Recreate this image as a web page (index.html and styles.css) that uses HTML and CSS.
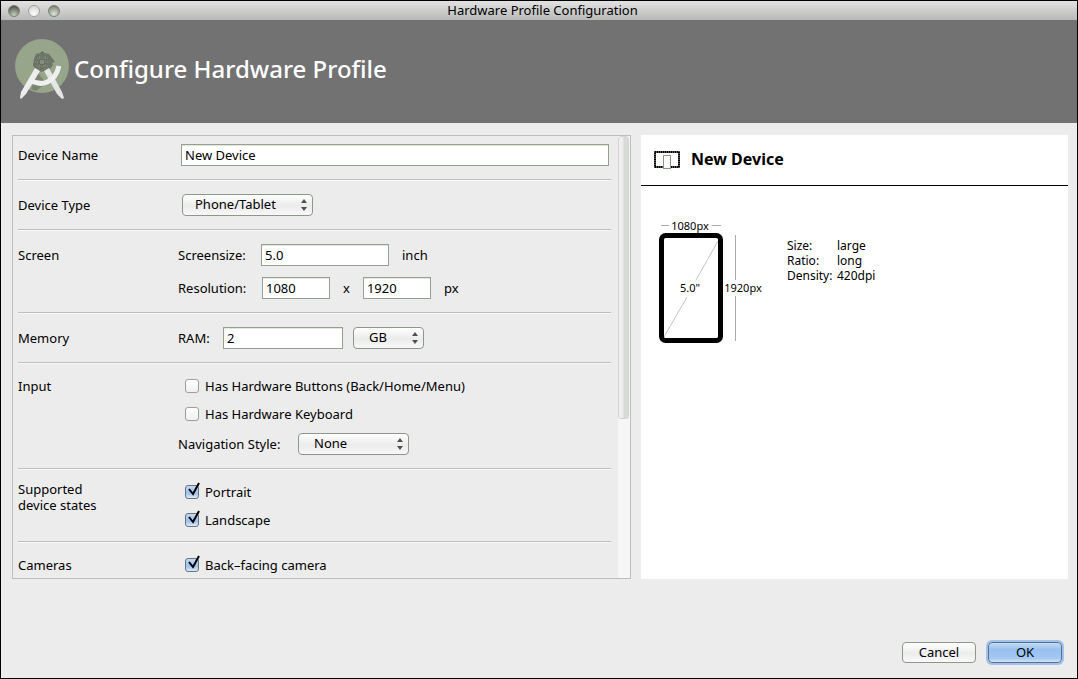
FILE: index.html
```html
<!DOCTYPE html>
<html lang="en">
<head>
<meta charset="utf-8">
<title>Hardware Profile Configuration</title>
<link rel="stylesheet" href="styles.css">
</head>
<body>
<div class="window">
  <div class="titlebar">
    <div class="lights">
      <button class="light light-dark" type="button" aria-label="Close"></button>
      <button class="light light-pale" type="button" aria-label="Minimize"></button>
      <button class="light" type="button" aria-label="Zoom"></button>
    </div>
    <div class="window-title">Hardware Profile Configuration</div>
  </div>

  <header class="banner">
    <svg class="logo" width="56" height="62" viewBox="0 0 56 62" aria-hidden="true">
      <circle cx="28" cy="27" r="27" fill="#97a58a"/>
      <path d="M24 34l-7 16 5 2 10-8z" fill="#7a8472"/>
      <path d="M20 20l2-5 4-1 2-2 3 2 4 1 6 8-3 1 1 2-5 6-11 1-4-7z" fill="#6c7468"/>
      <path d="M23 19h11M21 23h15M23 27h13M26 15l-1 15M31 15v15" stroke="#88937f" stroke-width="1" fill="none" stroke-dasharray="1 1"/>
      <circle cx="28" cy="23" r="3" fill="#858c80" stroke="#5f6a59"/>
      <path d="M21 29l5 3-14 23-5 5-1-1 1-6z" fill="#ededed"/>
      <path d="M30 32l5-3 13 24 2 6-2 1-5-5z" fill="#e5e5e5"/>
      <path d="M16 41c11 7 25 3 29-14" fill="none" stroke="#f0f0f0" stroke-width="5"/>
    </svg>
    <h1>Configure Hardware Profile</h1>
  </header>

  <main class="content">
    <form class="panel" id="profile">
      <div class="sections">
        <section class="section section-first">
          <label class="section-label" for="name">Device Name</label>
          <div class="row"><input class="text name" id="name" type="text" value="New Device"></div>
        </section>
        <section class="section">
          <label class="section-label" for="type">Device Type</label>
          <div class="row">
            <span class="select select-type"><select id="type"><option>Phone/Tablet</option></select><svg width="6" height="12" viewBox="0 0 6 12"><path d="M3 0l3 4H0zM0 8h6l-3 4z"/></svg></span>
          </div>
        </section>
        <section class="section">
          <div class="section-label">Screen</div>
          <div class="rows rows-loose">
            <div class="row">
              <label class="lead" for="size">Screensize:</label>
              <input class="text size" id="size" type="text" value="5.0">
              <span class="unit">inch</span>
            </div>
            <div class="row">
              <label class="lead lead-res" for="resx">Resolution:</label>
              <input class="text res" id="resx" type="text" value="1080">
              <label class="unit" for="resy">x</label>
              <input class="text res" id="resy" type="text" value="1920">
              <span class="unit">px</span>
            </div>
          </div>
        </section>
        <section class="section">
          <div class="section-label">Memory</div>
          <div class="row">
            <label class="lead lead-ram" for="ram">RAM:</label>
            <input class="text ram" id="ram" type="text" value="2">
            <span class="select select-unit"><select aria-label="Memory unit"><option>GB</option></select><svg width="6" height="12" viewBox="0 0 6 12"><path d="M3 0l3 4H0zM0 8h6l-3 4z"/></svg></span>
          </div>
        </section>
        <section class="section section-checks">
          <div class="section-label">Input</div>
          <div class="rows rows-input">
            <div class="rows">
              <label class="check"><input type="checkbox"><span>Has Hardware Buttons (Back/Home/Menu)</span></label>
              <label class="check"><input type="checkbox"><span>Has Hardware Keyboard</span></label>
            </div>
            <div class="row">
              <label class="lead lead-nav" for="nav">Navigation Style:</label>
              <span class="select select-nav"><select id="nav"><option>None</option></select><svg width="6" height="12" viewBox="0 0 6 12"><path d="M3 0l3 4H0zM0 8h6l-3 4z"/></svg></span>
            </div>
          </div>
        </section>
        <section class="section section-states">
          <div class="section-label label-tall">Supported<br>device states</div>
          <div class="rows">
            <label class="check"><input type="checkbox" checked><svg width="17" height="18" viewBox="0 0 17 18"><path d="M4 8l4 5 6-11"/></svg><span>Portrait</span></label>
            <label class="check"><input type="checkbox" checked><svg width="17" height="18" viewBox="0 0 17 18"><path d="M4 8l4 5 6-11"/></svg><span>Landscape</span></label>
          </div>
        </section>
        <section class="section section-checks">
          <div class="section-label">Cameras</div>
          <div class="rows">
            <label class="check"><input type="checkbox" checked><svg width="17" height="18" viewBox="0 0 17 18"><path d="M4 8l4 5 6-11"/></svg><span>Back–facing camera</span></label>
          </div>
        </section>
      </div>
      <div class="track"><div class="thumb"></div></div>
    </form>

    <aside class="preview">
      <div class="preview-head">
        <svg width="26" height="18" viewBox="0 0 26 18" aria-hidden="true">
          <path d="M1 1H25V16H1Z" fill="#fff" stroke="#555" stroke-width="2"/>
          <path d="M1 1H25V16H1Z" fill="none" stroke="#000" stroke-width="2" stroke-dasharray="1 1"/>
          <rect x="9.500" y="4.500" width="7" height="13" fill="#fff" stroke="#8a9582"/>
        </svg>
        <h2>New Device</h2>
      </div>
      <div class="preview-body">
        <svg class="diagram" width="108" height="130" viewBox="0 -6 108 130" role="img" aria-label="Device dimensions">
          <path d="M2 5.500H10M53 5.500H62M76.500 15V60M76.500 76V121" stroke="#aaa" fill="none"/>
          <path d="M5 117L28 77M37 60L59 21" stroke="#c4c4c4" fill="none"/>
          <rect x="2.500" y="15.500" width="59" height="105" rx="4" fill="none" stroke="#000" stroke-width="5"/>
          <text x="31" y="10" text-anchor="middle">1080px</text>
          <text x="31" y="72" text-anchor="middle">5.0"</text>
          <text x="84" y="72" text-anchor="middle">1920px</text>
        </svg>
        <dl class="specs">
          <dt>Size:</dt><dd>large</dd>
          <dt>Ratio:</dt><dd>long</dd>
          <dt>Density:</dt><dd>420dpi</dd>
        </dl>
      </div>
    </aside>
  </main>

  <footer class="actions">
    <button class="button" type="button">Cancel</button>
    <button class="button button-default" type="submit" form="profile">OK</button>
  </footer>
</div>
</body>
</html>
```
FILE: styles.css
```css
* { box-sizing: border-box; }

body {
  margin: 0;
  font: 13px/16px "Noto Sans", "Open Sans", sans-serif;
  color: #000;
}

h1, h2, dl, dd { margin: 0; }

input, select, button { font: inherit; color: inherit; margin: 0; }

.window {
  display: flex;
  flex-direction: column;
  height: 100vh;
  border: 1px solid #000;
  background: #ececec;
}

.titlebar {
  display: grid;
  grid-template-columns: 1fr auto 1fr;
  align-items: center;
  height: 19px;
  flex: none;
  padding-left: 7px;
  background: linear-gradient(#e2e2e2, #b8bab6);
}

.window-title { padding-bottom: 2px; }

.lights { display: flex; gap: 8px; }

.light {
  width: 12px;
  height: 12px;
  padding: 0;
  border: 1px solid #7c8376;
  border-radius: 50%;
  background: radial-gradient(circle at 50% 80%, #e0e4dc, #8c9684 70%, #50564c);
}

.light-dark { background: radial-gradient(circle at 50% 90%, #c8cec2, #747c6e 60%, #30342c); }

.light-pale { border-color: #a0a39d; background: radial-gradient(circle at 50% 80%, #fff, #cdcdcd); }

.banner {
  display: flex;
  align-items: center;
  gap: 4px;
  flex: none;
  height: 103px;
  padding-left: 13px;
  background: #727272;
  color: #fff;
}

.logo { margin-bottom: 4px; }

h1 { font-size: 24px; line-height: 32px; font-weight: 500; padding-bottom: 6px; }

.content {
  display: grid;
  grid-template-columns: 619fr 427fr;
  grid-template-rows: minmax(0, 1fr);
  gap: 10px;
  flex: 1;
  min-height: 0;
  padding: 12px 9px 0 11px;
}

.panel {
  display: flex;
  overflow: hidden;
  border: 1px solid #bcbebb;
}

.sections { flex: 1; padding: 0 7px 0 5px; }

.section {
  display: grid;
  grid-template-columns: 160px 1fr;
  padding: 14px 0 13px;
  border-bottom: 1px solid #bdbfbc;
  box-shadow: 0 1px #f8f8f8;
}

.section-first { padding: 8px 0 13px; }
.section-checks { padding: 12px 0 13px; }
.section-states { padding: 12px 0 10px; }

.section-label { line-height: 22px; }
.label-tall { line-height: 16px; }

.rows { display: flex; flex-direction: column; gap: 6px; }
.rows-loose { gap: 11px; }
.rows-input { gap: 8px; }

.row { display: flex; align-items: center; height: 22px; }

.lead { width: 83px; }
.lead-res { width: 84px; }
.lead-ram { width: 45px; }
.lead-nav { width: 120px; }

.text {
  height: 22px;
  padding: 0 3px;
  border: 1px solid #96a18b;
  background: #fff;
  box-shadow: inset 0 1px #e4e6e2;
}

.name { flex: 1; margin: 0 2px 0 3px; }
.size { width: 128px; }
.res { width: 68px; }
.ram { width: 120px; margin-right: 10px; }
.unit { padding: 0 13px; }

.select { display: grid; align-items: center; }
.select > * { grid-area: 1 / 1; }
.select svg { justify-self: end; margin-right: 6px; fill: #505050; pointer-events: none; }

select {
  appearance: none;
  width: 100%;
  height: 22px;
  padding: 0 12px 2px;
  border: 1px solid #8e9985;
  border-radius: 4px;
  background: linear-gradient(#fff, #ebebeb 55%, #f8f8f8);
}

.select-type { width: 131px; margin-left: 4px; }
.select-unit { width: 71px; }
.select-unit select, .select-nav select { padding: 0 15px 2px; }
.select-nav { width: 111px; }

.check {
  display: grid;
  grid-template-columns: 20px 1fr;
  align-items: center;
  height: 22px;
  padding-left: 7px;
}

.check input {
  grid-area: 1 / 1;
  appearance: none;
  width: 14px;
  height: 14px;
  border: 1px solid #98a28e;
  border-radius: 3px;
  background: linear-gradient(#fff, #f0f0f0);
}

.check input:checked { border-color: #69757f; background: linear-gradient(#c0d8f4, #9cc0ee 60%, #dcebfa); }
.check span { grid-area: 1 / 2; }
.check svg { grid-area: 1 / 1; z-index: 1; margin-bottom: 4px; fill: none; stroke: #000; stroke-width: 2; pointer-events: none; }

.track { width: 12px; background: #f6f6f6; }

.thumb {
  width: 11px;
  height: 64%;
  border: 1px solid #d2d4d1;
  border-radius: 3px;
  background: linear-gradient(90deg, #efefef 35%, #d8dad7 60%);
}

.preview { background: #fff; }

.preview-head {
  display: flex;
  align-items: center;
  gap: 11px;
  height: 51px;
  padding-left: 13px;
  border-bottom: 1px solid #000;
}

h2 { font-size: 16px; line-height: 20px; font-weight: 700; padding-bottom: 2px; }

.preview-body { display: flex; align-items: flex-start; gap: 20px; padding: 28px 18px; }

.diagram { flex: none; font-size: 11px; }

.specs {
  display: grid;
  grid-template-columns: 50px auto;
  padding-top: 24px;
  font-size: 12px;
  line-height: 15px;
}

.actions {
  display: flex;
  justify-content: flex-end;
  gap: 12px;
  flex: none;
  padding: 63px 15px 15px;
}

.button {
  width: 74px;
  height: 21px;
  padding: 0 0 2px;
  border: 1px solid #8e9985;
  border-radius: 4px;
  background: linear-gradient(#fff, #ececec 55%, #fafafa);
}

.button-default {
  border-color: #5f6f82;
  background: linear-gradient(#c4daf4, #98c0f0 35%, #a4c8f2 80%, #cfe2f8);
  box-shadow: 0 0 0 2px #9fc3ee;
}
```
